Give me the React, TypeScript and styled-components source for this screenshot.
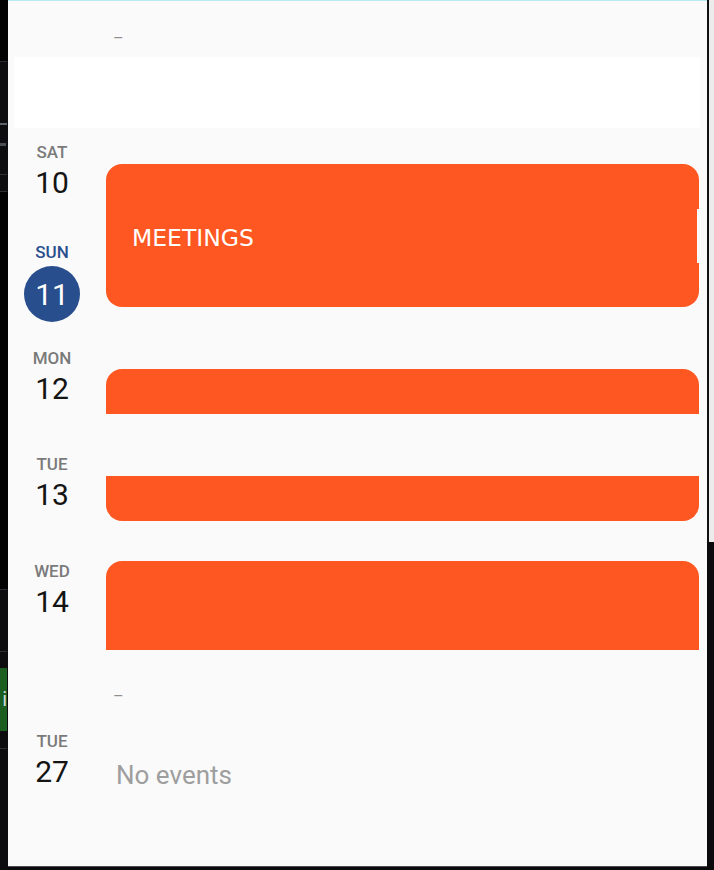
import React from 'react';
import styled, { createGlobalStyle } from 'styled-components';

const GlobalStyle = createGlobalStyle`
  *, *::before, *::after {
    box-sizing: border-box;
  }
  html, body {
    margin: 0;
    background: #0a0a0c;
  }
  body {
    font-family: Roboto, "Noto Sans", sans-serif;
  }
`;

const Page = styled.div`
  display: flex;
  width: 714px;
  height: 870px;
  overflow: hidden;
`;

const LeftRail = styled.div`
  width: 8px;
  flex-shrink: 0;
  display: flex;
  flex-direction: column;
  background: #0d0d10;
`;

const RailPiece = styled.div<{ $h: number; $bg: string; $w?: number }>`
  height: ${p => p.$h}px;
  width: ${p => (p.$w ? `${p.$w}px` : '100%')};
  background: ${p => p.$bg};
  flex-shrink: 0;
`;

const RailTag = styled.div`
  height: 63px;
  width: 7px;
  background: #1b5e20;
  color: #cfd8dc;
  font-size: 20px;
  line-height: 63px;
  text-align: right;
  overflow: hidden;
  flex-shrink: 0;
`;

const Panel = styled.div`
  width: 699px;
  height: 867px;
  flex-shrink: 0;
  display: flex;
  flex-direction: column;
  background: #fafafa;
  border-bottom: 1px solid #4a4a4f;
`;

const TopBand = styled.div`
  height: 57px;
  flex-shrink: 0;
  border-top: 1px solid #b6eaf0;
  padding: 33px 0 0 105px;
`;

const Dash = styled.span`
  display: block;
  font-size: 16px;
  line-height: 9px;
  color: #8f8f8f;
`;

const WhiteBand = styled.div`
  height: 71px;
  flex-shrink: 0;
  margin: 0 7px 0 6px;
  background: #ffffff;
`;

const Agenda = styled.div`
  display: flex;
  flex-direction: column;
`;

const DayGroup = styled.div`
  display: flex;
  align-items: flex-start;
  padding-right: 8px;
`;

const DateCol = styled.div<{ $top: number }>`
  width: 88px;
  flex-shrink: 0;
  display: flex;
  flex-direction: column;
  align-items: center;
  gap: 45px;
  padding-top: ${p => p.$top}px;
`;

const DayCell = styled.div`
  display: flex;
  flex-direction: column;
  align-items: center;
  gap: 6px;
`;

const DayName = styled.div<{ $today?: boolean }>`
  font-size: 17px;
  line-height: 17px;
  font-weight: 500;
  color: ${p => (p.$today ? '#2a4f8e' : '#7a7a7a')};
`;

const DayNum = styled.div`
  font-size: 30px;
  line-height: 32px;
  color: #141414;
`;

const TodayNum = styled.div`
  width: 56px;
  height: 56px;
  margin-top: -1px;
  border-radius: 50%;
  background: #284e8d;
  color: #ffffff;
  font-size: 30px;
  display: flex;
  align-items: center;
  justify-content: center;
`;

const EventCol = styled.div<{ $offset: number }>`
  flex: 1;
  margin-left: 10px;
  padding-top: ${p => p.$offset}px;
  display: flex;
  flex-direction: column;
`;

const EventCard = styled.div<{ $h: number; $radius: string }>`
  position: relative;
  height: ${p => p.$h}px;
  border-radius: ${p => p.$radius};
  background: #ff5722;
  display: flex;
  align-items: center;
  padding: 5px 0 0 26px;
  color: #ffffff;
  font-family: "DejaVu Sans", Verdana, sans-serif;
  font-size: 23.5px;
`;

const EdgeNotch = styled.div`
  position: absolute;
  right: 0;
  top: 45px;
  width: 2px;
  height: 54px;
  background: #fafafa;
`;

const DashRow = styled.div`
  height: 51px;
  padding: 42px 0 0 105px;
`;

const NoEvents = styled.div`
  padding-left: 10px;
  font-size: 26px;
  line-height: 30px;
  color: #9e9e9e;
`;

const RightRail = styled.div`
  flex: 1;
  display: flex;
  flex-direction: column;
`;

const RightTop = styled.div`
  height: 542px;
  background: #ececec;
  border-left: 2px solid #111114;
`;

const RightBottom = styled.div`
  flex: 1;
  background: #0a0a0c;
`;

interface Day {
  dow: string;
  n: number;
  today?: boolean;
}

interface Group {
  days: Day[];
  top: number;
  offset: number;
  h: number;
  radius: string;
  label?: string;
  notch?: boolean;
}

const groups: Group[] = [
  {
    days: [{ dow: 'SAT', n: 10 }, { dow: 'SUN', n: 11, today: true }],
    top: 16,
    offset: 36,
    h: 143,
    radius: '16px',
    label: 'MEETINGS',
    notch: true,
  },
  { days: [{ dow: 'MON', n: 12 }], top: 28, offset: 47, h: 45, radius: '16px 16px 0 0' },
  { days: [{ dow: 'TUE', n: 13 }], top: 42, offset: 62, h: 45, radius: '0 0 16px 16px' },
  { days: [{ dow: 'WED', n: 14 }], top: 42, offset: 40, h: 89, radius: '16px 16px 0 0' },
];

const rail: { h: number; bg: string; w?: number }[] = [
  { h: 61, bg: '#020203' },
  { h: 1, bg: '#2e2e33', w: 7 },
  { h: 61, bg: '#0d0d10' },
  { h: 2, bg: '#5f6368', w: 7 },
  { h: 18, bg: '#0d0d10' },
  { h: 3, bg: '#4a4e53', w: 6 },
  { h: 28, bg: '#0d0d10' },
  { h: 1, bg: '#2e2e33', w: 7 },
  { h: 16, bg: '#0d0d10' },
  { h: 1, bg: '#2e2e33', w: 7 },
  { h: 397, bg: '#020203' },
  { h: 1, bg: '#2e2e33', w: 7 },
  { h: 61, bg: '#0d0d10' },
  { h: 1, bg: '#2e2e33', w: 7 },
  { h: 16, bg: '#0d0d10' },
];

function DayBlock({ day }: { day: Day }) {
  return (
    <DayCell>
      <DayName $today={day.today}>{day.dow}</DayName>
      {day.today ? <TodayNum>{day.n}</TodayNum> : <DayNum>{day.n}</DayNum>}
    </DayCell>
  );
}

export default function App() {
  return (
    <>
      <GlobalStyle />
      <Page>
        <LeftRail>
          {rail.map((r, i) => (
            <RailPiece key={i} $h={r.h} $bg={r.bg} $w={r.w} />
          ))}
          <RailTag>i</RailTag>
          <RailPiece $h={17} $bg="#0d0d10" />
          <RailPiece $h={1} $bg="#2e2e33" $w={7} />
        </LeftRail>

        <Panel>
          <TopBand>
            <Dash>–</Dash>
          </TopBand>
          <WhiteBand />

          <Agenda>
            {groups.map(g => (
              <DayGroup key={g.days[0].dow}>
                <DateCol $top={g.top}>
                  {g.days.map(d => (
                    <DayBlock key={d.dow} day={d} />
                  ))}
                </DateCol>
                <EventCol $offset={g.offset}>
                  <EventCard $h={g.h} $radius={g.radius}>
                    {g.label}
                    {g.notch && <EdgeNotch />}
                  </EventCard>
                </EventCol>
              </DayGroup>
            ))}

            <DashRow>
              <Dash>–</Dash>
            </DashRow>

            <DayGroup>
              <DateCol $top={32}>
                <DayBlock day={{ dow: 'TUE', n: 27 }} />
              </DateCol>
              <EventCol $offset={59}>
                <NoEvents>No events</NoEvents>
              </EventCol>
            </DayGroup>
          </Agenda>
        </Panel>

        <RightRail>
          <RightTop />
          <RightBottom />
        </RightRail>
      </Page>
    </>
  );
}
